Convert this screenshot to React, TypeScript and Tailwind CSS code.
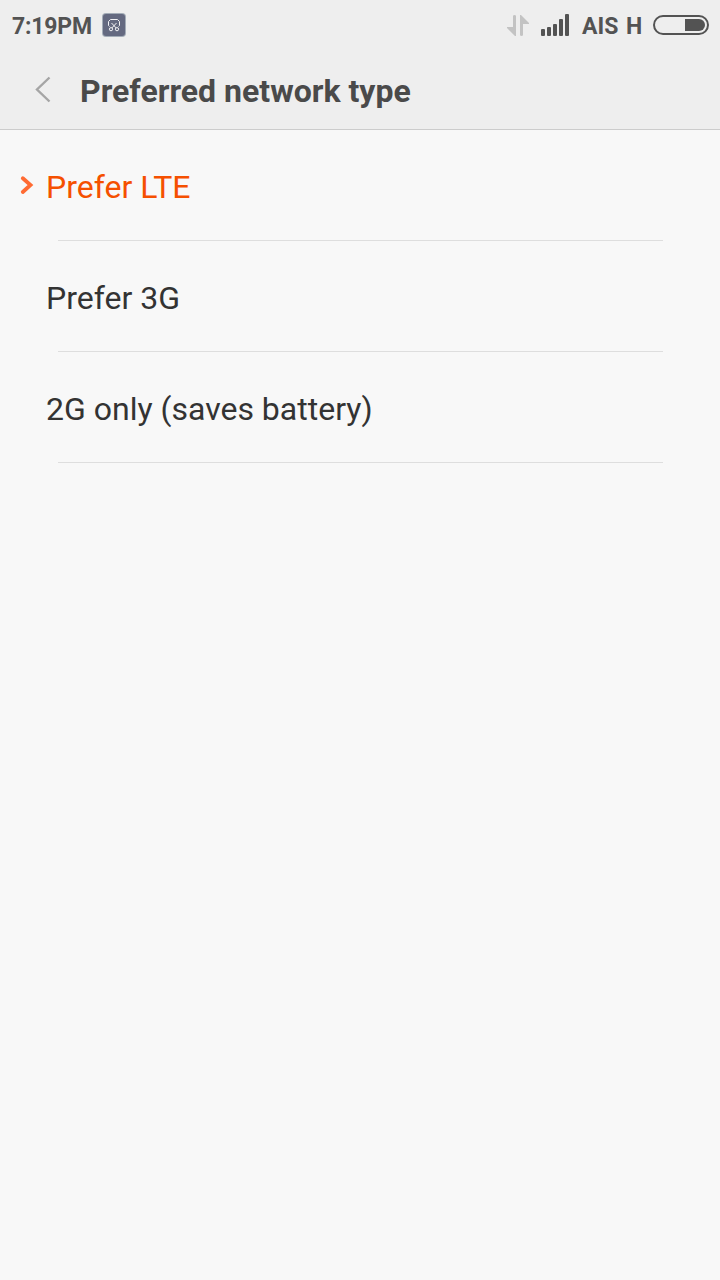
import clsx from "clsx"

const OPTIONS = [
	{ id: "lte", label: "Prefer LTE" },
	{ id: "3g", label: "Prefer 3G" },
	{ id: "2g", label: "2G only (saves battery)" },
]

function ScreenshotBadge() {
	return (
		<svg width="24" height="24" viewBox="0 0 24 24" fill="none">
			<rect width="24" height="24" rx="4" fill="#a3acb7" />
			<rect x="1" y="1" width="22" height="22" rx="3" fill="#646980" />
			<g stroke="#f1f1f4" strokeWidth="1">
				<path d="M7.5 13.5l-1-1V8.5l2-2h7l2 2v4l-1 1" />
				<path d="M9.5 10l4.7 5M14.5 10l-4.7 5" />
				<circle cx="9" cy="16.2" r="1.6" />
				<circle cx="15" cy="16.2" r="1.6" />
			</g>
		</svg>
	)
}

function DataArrows() {
	return (
		<svg width="22" height="22" viewBox="0 0 22 22" fill="#c3c3c3">
			<path d="M6 2.2Q6 1 7.5 1T9 2.2V22H8L0 14v-1h6z" />
			<path d="M13 1h1L22 9v1h-6v10.8q0 1.2-1.5 1.2T13 20.8z" />
		</svg>
	)
}

function SignalBars() {
	return (
		<svg width="28" height="22" viewBox="0 0 28 22" fill="#535353">
			<rect x="0" y="15" width="4" height="7" rx="1" />
			<rect x="6" y="13" width="4" height="9" rx="1" />
			<rect x="12" y="10" width="4" height="12" rx="1" />
			<rect x="18" y="5" width="4" height="17" rx="1" />
			<rect x="24" y="0" width="4" height="22" rx="1" />
		</svg>
	)
}

function Battery() {
	return (
		<svg width="56" height="20" viewBox="0 0 56 20" fill="none">
			<rect
				x="1"
				y="1"
				width="54"
				height="18"
				rx="9"
				stroke="#535353"
				strokeWidth="2"
			/>
			<path d="M32 4h14a6 6 0 0 1 0 12H32z" fill="#535353" />
		</svg>
	)
}

function StatusBar() {
	return (
		<div className="flex h-[50px] items-center justify-between pr-[11px] pl-3 text-[23px] font-bold text-[#535353]">
			<div className="flex items-center">
				<span className="w-[90px] pt-1 leading-7 tracking-[-0.2px] whitespace-nowrap">
					7:19PM
				</span>
				<ScreenshotBadge />
			</div>
			<div className="flex items-center">
				<DataArrows />
				<div className="ml-3">
					<SignalBars />
				</div>
				<span className="ml-[13px] w-[71px] pt-1 leading-7 [word-spacing:2px] whitespace-nowrap">
					AIS H
				</span>
				<Battery />
			</div>
		</div>
	)
}

export default function App() {
	const selected = "lte"

	return (
		<div className="min-h-[1280px] w-[720px] bg-[#f8f8f8] font-['Roboto',sans-serif]">
			<header className="h-[130px] border-b border-[#cccccc] bg-[#eeeeee]">
				<StatusBar />
				<div className="flex h-[79px] items-center pl-[35px]">
					<button type="button" aria-label="Back">
						<svg
							width="16"
							height="26"
							viewBox="0 0 16 26"
							fill="none"
							stroke="#a5a5a5"
							strokeWidth="2.4"
							className="overflow-visible"
						>
							<path d="M14.5 0.5L2 12.5l12.5 12" />
						</svg>
					</button>
					<h1 className="ml-[29px] pt-[3px] text-[32px] leading-10 font-bold whitespace-nowrap text-[#4a4a4a]">
						Preferred network type
					</h1>
				</div>
			</header>

			<ul>
				{OPTIONS.map((option) => {
					const active = option.id === selected
					return (
						<li key={option.id} className="h-[111px]">
							<div
								className={clsx(
									"flex h-[110px] items-center pt-1 text-[32px] leading-10",
									active ? "text-[#f55000]" : "text-[#333333]",
								)}
							>
								<span className="flex w-[46px] pl-5">
									{active && (
										<svg
											width="14"
											height="20"
											viewBox="0 0 14 20"
											fill="none"
											stroke="#ff6b33"
											strokeWidth="3.8"
											strokeLinecap="round"
											className="overflow-visible"
										>
											<path d="M2.8 1.3L10.5 8l-7.7 7" />
										</svg>
									)}
								</span>
								{option.label}
							</div>
							<div className="mr-[57px] ml-[58px] h-px bg-[#dedede]" />
						</li>
					)
				})}
			</ul>
		</div>
	)
}
